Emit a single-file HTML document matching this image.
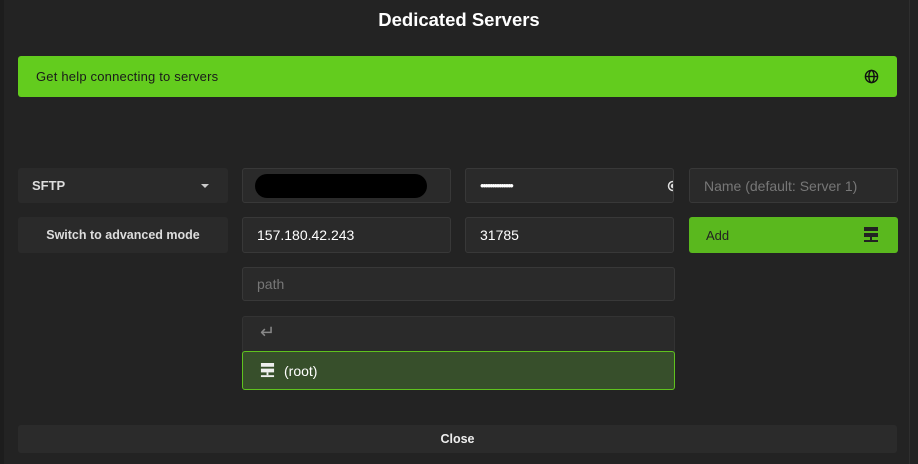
<!DOCTYPE html>
<html><head><style>
*{box-sizing:border-box;margin:0;padding:0}
body{width:918px;height:464px;background:#232323;font-family:"Liberation Sans",sans-serif;position:relative;overflow:hidden;color:#eee}
.a{position:absolute}
.in{position:absolute;background:#2a2a2a;border:1px solid #383838;border-radius:3px;font-size:14px;padding-left:14px;display:flex;align-items:center;overflow:hidden}
</style></head><body>
<div class="a" style="left:0;top:0;width:4px;height:464px;background:#1d1d1d"></div>
<div class="a" style="left:909px;top:0;width:1px;height:464px;background:#2e2e2e"></div>
<div class="a" style="left:0;top:9px;width:918px;text-align:center;font-size:18.5px;font-weight:bold;color:#fff">Dedicated Servers</div>
<div class="a" style="left:18px;top:56px;width:879px;height:41px;background:#63cc1e;border-radius:3px;color:#1a1a1a;font-size:13px;padding-left:18px;display:flex;align-items:center;letter-spacing:0.2px">Get help connecting to servers
<svg class="a" style="left:846px;top:13px" width="15" height="15" viewBox="0 0 16 16" fill="none" stroke="#111" stroke-width="1.5"><circle cx="8" cy="8" r="6.5"/><ellipse cx="8" cy="8" rx="2.8" ry="6.5"/><path d="M1.5 8h13"/></svg></div>
<div class="in" style="left:18px;top:168px;width:210px;height:35px;border:none;font-size:13px;font-weight:bold;color:#ddd">SFTP<span class="a" style="left:183px;top:16px;border:4px solid transparent;border-top:4px solid #ccc;border-bottom:0"></span></div>
<div class="in" style="left:242px;top:168px;width:209px;height:35px"><div style="width:172px;height:24px;background:#000;border-radius:12px;margin-left:-2px"></div></div>
<div class="in" style="left:465px;top:168px;width:209px;height:35px;font-size:13px;letter-spacing:-2.3px;color:#fff">••••••••••••••<svg class="a" style="left:201px;top:11px" width="12" height="12" viewBox="0 0 12 12" fill="none" stroke="#ddd" stroke-width="1.5"><circle cx="6" cy="6" r="4.5"/><circle cx="6" cy="6" r="1.5" fill="#ddd"/></svg></div>
<div class="in" style="left:689px;top:168px;width:209px;height:35px;color:#777">Name (default: Server 1)</div>
<div class="in" style="left:18px;top:217px;width:210px;height:36px;border:none;justify-content:center;padding:0;font-size:12.5px;font-weight:bold;color:#ddd">Switch to advanced mode</div>
<div class="in" style="left:242px;top:217px;width:209px;height:36px;color:#fff">157.180.42.243</div>
<div class="in" style="left:465px;top:217px;width:209px;height:36px;color:#fff">31785</div>
<div class="in" style="left:689px;top:217px;width:209px;height:36px;background:#5ab81e;border:none;color:#222;font-size:13px;padding-left:17px;overflow:visible">Add
<svg class="a" style="left:174px;top:10px" width="16" height="16" viewBox="0 0 16 16" fill="#222"><rect x="1" y="0" width="14" height="4"/><rect x="1" y="6" width="14" height="4"/><rect x="7" y="10" width="2" height="3"/><rect x="1" y="13" width="14" height="2"/></svg></div>
<div class="in" style="left:242px;top:267px;width:433px;height:34px;color:#777">path</div>
<div class="a" style="left:242px;top:316px;width:433px;height:74px;background:#2a2a2a;border:1px solid #333;border-radius:3px"></div>
<div class="a" style="left:260px;top:322px;font-size:18px;color:#888">↵</div>
<div class="a" style="left:242px;top:351px;width:433px;height:39px;background:#374f2b;border:1px solid #5fc21e;border-radius:3px;font-size:14px;color:#fff;padding-left:41px;display:flex;align-items:center">(root)
<svg class="a" style="left:17px;top:11px" width="15" height="15" viewBox="0 0 16 16" fill="#eee"><rect x="1" y="0" width="14" height="4"/><rect x="1" y="6" width="14" height="4"/><rect x="7" y="10" width="2" height="3"/><rect x="1" y="13" width="14" height="2"/></svg></div>
<div class="a" style="left:18px;top:425px;width:879px;height:28px;background:#2b2b2b;border-radius:3px;text-align:center;line-height:28px;font-size:12.5px;font-weight:bold;color:#eee">Close</div>
</body></html>
